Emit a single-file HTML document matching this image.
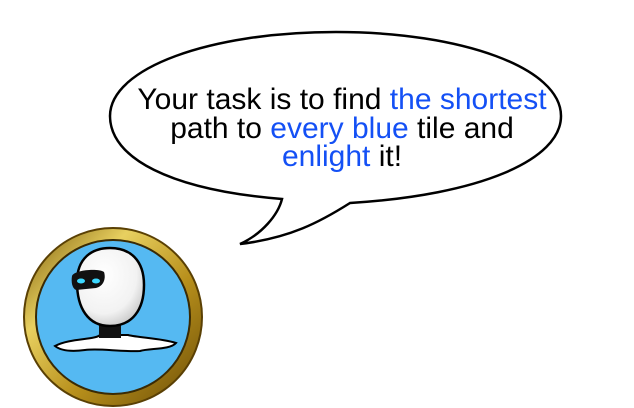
<!DOCTYPE html>
<html><head><style>
html,body{margin:0;padding:0;background:#fff;width:634px;height:408px;overflow:hidden;position:relative}
.t{position:absolute;left:66px;width:552px;top:86px;text-align:center;font-family:"Liberation Sans",sans-serif;font-size:30px;line-height:28.5px;color:#000;white-space:nowrap}
.b{color:#1450f5}
</style></head><body>
<svg width="634" height="408" style="position:absolute;left:0;top:0">
<defs>
<linearGradient id="g" x1="0" y1="0" x2="1" y2="1">
<stop offset="0" stop-color="#7a5a08"/><stop offset="0.3" stop-color="#e8d060"/><stop offset="0.6" stop-color="#b8901c"/><stop offset="1" stop-color="#6a4c06"/>
</linearGradient>
<radialGradient id="h" cx="0.4" cy="0.35" r="0.7"><stop offset="0" stop-color="#fff"/><stop offset="0.7" stop-color="#f2f2f2"/><stop offset="1" stop-color="#c8c8c8"/></radialGradient>
</defs>
<path d="M282,199 C170,190 110,158 110,116 C110,68 210,32 336,32 C462,32 561,68 561,116 C561,160 480,195 350,203 C320,222 290,238 240,244 C262,234 278,215 282,199 Z" fill="#fff" stroke="#000" stroke-width="2.5"/>
<circle cx="113" cy="317" r="89" fill="url(#g)" stroke="#5a4004" stroke-width="2"/>
<circle cx="113" cy="317" r="77" fill="#55b9f2" stroke="#3a2a04" stroke-width="2"/>
<path d="M55,346 C70,338 95,340 100,335 L128,335 C140,338 160,338 176,343 C170,350 150,348 140,351 C120,352 100,348 85,350 C70,352 60,350 55,346 Z" fill="#fff" stroke="#000" stroke-width="2"/>
<rect x="99" y="320" width="22" height="18" fill="#111"/>
<path d="M77,282 C77,258 92,248 110,248 C130,248 144,260 144,285 C144,310 132,326 110,326 C88,326 77,308 77,282 Z" fill="url(#h)" stroke="#000" stroke-width="2.5"/>
<path d="M72,276 C74,270 98,268 104,272 C106,278 104,286 96,288 L76,290 C72,288 71,282 72,276 Z" fill="#111"/>
<ellipse cx="81" cy="281" rx="4" ry="2.5" fill="#3cd8ff"/>
<ellipse cx="96" cy="281" rx="4" ry="2.5" fill="#3cd8ff"/>
</svg>
<div class="t">Your task is to find <span class="b">the shortest</span><br>path to <span class="b">every blue</span> tile and<br><span class="b">enlight</span> it!</div>
</body></html>
